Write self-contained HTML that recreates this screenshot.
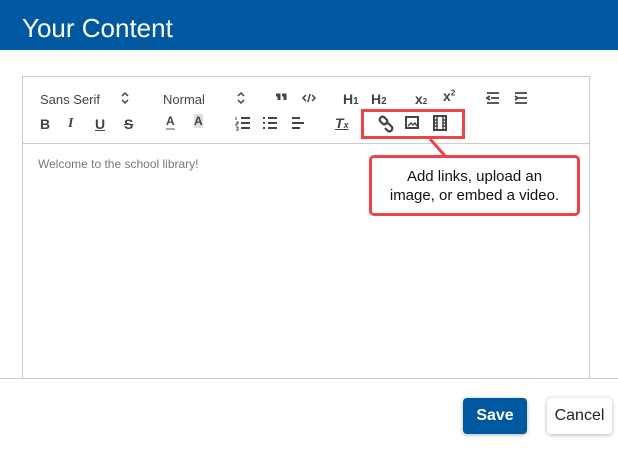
<!DOCTYPE html><html><head><style>
body{margin:0;width:618px;height:451px;position:relative;background:#fff;font-family:"Liberation Sans",sans-serif;overflow:hidden}
.hdr{position:absolute;left:0;top:0;width:618px;height:50px;background:#0059a0;color:#fff;font-size:26px;line-height:56px;padding-left:22px;box-sizing:border-box}
.ed{position:absolute;left:22px;top:76px;width:568px;height:320px;border:1px solid #ccc;box-sizing:border-box}
.tb{position:absolute;left:22px;top:143px;width:568px;border-top:1px solid #ccc}
.t{position:absolute;font-size:13px;color:#444}
.b{position:absolute;font-weight:bold;font-size:14px;color:#444}
.foot{position:absolute;left:0;top:378px;width:618px;height:73px;background:#fff;border-top:1px solid #ccc}
.btn{position:absolute;top:398px;height:36px;border-radius:4px;font-size:16px;line-height:36px;text-align:center;box-shadow:0 1px 4px rgba(0,0,0,.3)}
</style></head><body>
<div class="hdr">Your Content</div>
<div class="ed"></div><div class="tb"></div>
<div class="t" style="left:40px;top:92px">Sans Serif</div>
<div class="t" style="left:163px;top:92px">Normal</div>
<div class="b" style="left:343px;top:91px">H<span style="font-size:10px">1</span></div>
<div class="b" style="left:371px;top:91px">H<span style="font-size:10px">2</span></div>
<div class="b" style="left:415px;top:91px">x<span style="font-size:8px">2</span></div>
<div class="b" style="left:443px;top:88px">x<sup style="font-size:8px">2</sup></div>
<div class="b" style="left:40px;top:116px">B</div>
<div class="b" style="left:68px;top:116px;font-style:italic;font-family:'Liberation Serif'">I</div>
<div class="b" style="left:95px;top:116px;text-decoration:underline">U</div>
<div class="b" style="left:124px;top:116px;text-decoration:line-through">S</div>
<div class="b" style="left:166px;top:114px;font-size:12px;border-bottom:2px solid #aaa">A</div>
<div class="b" style="left:194px;top:114px;font-size:12px;background:#ddd">A</div>
<div class="b" style="left:335px;top:115px;font-style:italic;text-decoration:underline">T<span style="font-size:9px">x</span></div>
<svg style="position:absolute;left:0;top:0" width="618" height="451" fill="none" stroke="#444" stroke-width="2">
<path d="M128 96l-3-3-3 3M128 100l-3 3-3-3" stroke-width="1.5"/>
<path d="M244 96l-3-3-3 3M244 100l-3 3-3-3" stroke-width="1.5"/>
<path d="M276 95h3v5M282 95h3v5" stroke-width="3"/>
<path d="M306 95l-3 3 3 3M312 95l3 3-3 3M310 94l-2 8" stroke-width="1.5"/>
<path d="M487 93h12M491 98h8M487 103h12M490 96l-3 2 3 2" stroke-width="1.8"/>
<path d="M515 93h12M519 98h8M515 103h12M515 96l3 2-3 2" stroke-width="1.8"/>
<path d="M241 118h9M241 123h9M241 128h9" /><path d="M236 117v3M236 122h2v2h-2v2M236 127h2v3h-2" stroke-width="1"/>
<path d="M268 118h9M268 123h9M268 128h9M263 118h2M263 123h2M263 128h2"/>
<path d="M292 118h8M292 123h12M292 128h8"/>
<path d="M380 121a3 3 0 0 1 4-4l3 3a3 3 0 0 1-4 4zM385 124a3 3 0 0 1 4 0l3 3a3 3 0 0 1-4 4l-3-3" stroke-width="2.2"/>
<rect x="406" y="117" width="12" height="11" stroke-width="2"/><path d="M408 126l3-3 2 2 2-2 2 3" stroke-width="1.5"/>
<rect x="434" y="116" width="12" height="14" stroke-width="2"/><path d="M437 116v14M443 116v14M434 120h3M434 123h3M434 126h3M443 120h3M443 123h3M443 126h3" stroke-width="1.5"/>
<line x1="430" y1="139" x2="446" y2="157" stroke="#f04048" stroke-width="3"/></svg>
<div style="position:absolute;left:361px;top:109px;width:104px;height:30px;border:3px solid #f04048;box-sizing:border-box"></div>
<div style="position:absolute;left:369px;top:155px;width:211px;height:61px;border:3px solid #f04048;border-radius:5px;box-sizing:border-box;background:#fff;text-align:center;font-size:15px;line-height:19px;padding-top:9px;color:#111">Add links, upload an<br>image, or embed a video.</div>
<div class="t" style="left:38px;top:157px;color:#777;font-size:12px">Welcome to the school library!</div>
<div class="foot"></div>
<div class="btn" style="left:463px;width:64px;background:#0059a0;color:#fff;font-weight:bold">Save</div>
<div class="btn" style="left:547px;width:65px;background:#fff;color:#222">Cancel</div>
</body></html>
